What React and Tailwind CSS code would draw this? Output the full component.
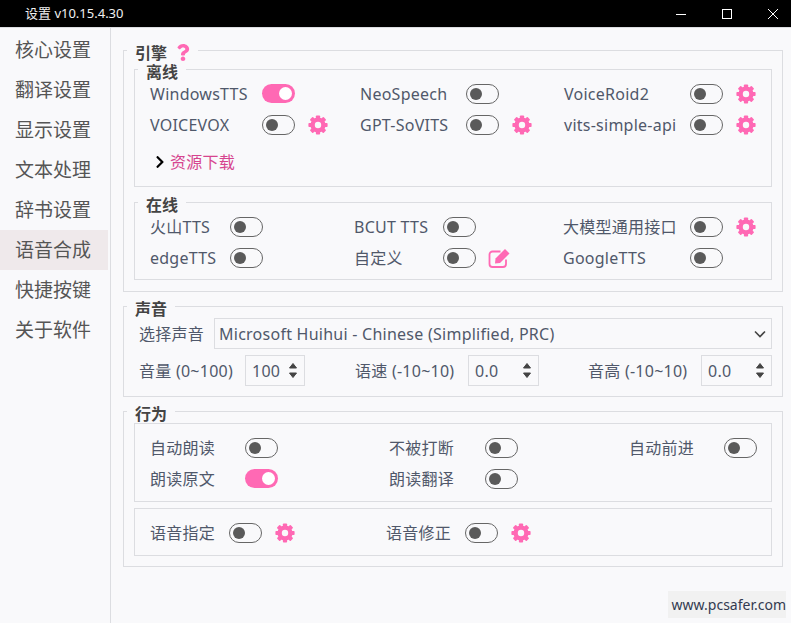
import React from "react";
import { FaQuestion, FaChevronRight } from "react-icons/fa";

const Toggle = ({ on }) =>
  on ? (
    <span className="flex h-[19px] w-[33px] shrink-0 items-center justify-end rounded-full bg-[#ff69b4] pr-[3px]">
      <span className="h-[13px] w-[13px] rounded-full bg-white" />
    </span>
  ) : (
    <span className="flex h-[20px] w-[33px] shrink-0 items-center rounded-full border border-[#666] pl-[3px]">
      <span className="h-[12px] w-[12px] rounded-full bg-[#5a5a5a]" />
    </span>
  );

const Gear = () => (
  <svg viewBox="0 0 20 20" className="ml-[13px] h-[20px] w-[20px] shrink-0 text-[#ff69b4]">
    <circle cx="10" cy="10" r="5.4" fill="none" stroke="currentColor" strokeWidth="4.4" />
    {[0, 45, 90, 135, 180, 225, 270, 315].map((a) => (
      <rect key={a} x="7.9" y="0.4" width="4.2" height="4.5" rx="0.8" fill="currentColor" transform={`rotate(${a} 10 10)`} />
    ))}
  </svg>
);

const EditIcon = () => (
  <svg viewBox="0 0 22 20" className="ml-[12px] h-[20px] w-[23px] shrink-0 text-[#ff69b4]">
    <path d="M12 3.500H4a3 3 0 0 0-3 3V16a3 3 0 0 0 3 3h10.500a3 3 0 0 0 3-3v-4.500" fill="none" stroke="currentColor" strokeWidth="1.800" />
    <path d="M7 10.500L16.500 1L21 5.500L11.500 15L6.500 15.500Z" fill="currentColor" />
  </svg>
);

const Cell = ({ label, w, on, gear, edit }) => (
  <div className="flex h-[31px] items-center">
    <span className={`whitespace-nowrap ${w}`}>{label}</span>
    <Toggle on={on} />
    {gear && <Gear />}
    {edit && <EditIcon />}
  </div>
);

const Group = ({ title, extra, className, children }) => (
  <section className={`relative border border-[#dcdde1] ${className}`}>
    {title && (
      <div className="absolute left-[3px] top-[-8px] flex h-[19px] items-center bg-[#f9f9fb] px-[8px] font-semibold leading-none tracking-normal text-[#444]">
        {title}
        {extra}
      </div>
    )}
    {children}
  </section>
);

const Spin = ({ value, w }) => (
  <div className={`flex h-[31px] items-center justify-between border border-[#dcdde1] pl-[6px] pr-[6px] ${w}`}>
    <span>{value}</span>
    <svg width="10" height="17" viewBox="0 0 10 17" className="text-[#444]">
      <path d="M5 1.500 L8.500 6 H1.500 Z M5 15.500 L8.500 11 H1.500 Z" fill="currentColor" stroke="currentColor" strokeLinejoin="round" />
    </svg>
  </div>
);

const nav = ["核心设置", "翻译设置", "显示设置", "文本处理", "辞书设置", "语音合成", "快捷按键", "关于软件"];

export default function App() {
  return (
    <div className="relative flex h-[623px] w-[791px] flex-col overflow-hidden bg-[#f9f9fb] font-['Noto_Sans','Noto_Sans_CJK_SC',sans-serif] text-[16px] tracking-[0.25px] text-[#50586a]">
      <header className="flex h-[27px] shrink-0 items-center bg-black pl-[25px] text-[13px] tracking-normal text-[#f0f0f0]">
        <span>设置 v10.15.4.30</span>
        <div className="ml-auto flex items-center gap-[36px] pr-[13px]">
          <svg width="10" height="10" viewBox="0 0 10 10" className="text-white"><path d="M0 5.500H10" stroke="currentColor" /></svg>
          <svg width="10" height="10" viewBox="0 0 10 10" className="text-white"><rect x=".5" y=".5" width="9" height="9" fill="none" stroke="currentColor" /></svg>
          <svg width="10" height="10" viewBox="0 0 10 10" className="text-white"><path d="M0 0L10 10M10 0L0 10" stroke="currentColor" /></svg>
        </div>
      </header>
      <div className="flex min-h-0 flex-1 border-t border-[#dcdde1]">
        <nav className="w-[111px] shrink-0 border-r border-[#dcdde1] pt-[2px] text-[19px] tracking-normal text-[#555]">
          {nav.map((n) => (
            <div key={n} className={`flex h-[40px] w-[108px] items-center pl-[15px] ${n === "语音合成" ? "bg-[#efe9eb]" : ""}`}>{n}</div>
          ))}
        </nav>
        <main className="flex flex-1 flex-col gap-[14px] pl-[12px] pr-[8px] pt-[22px]">
          <Group
            title="引擎"
            extra={<FaQuestion className="ml-[9px] h-[17px] w-[14px] text-[#ff69b4]" />}
            className="h-[242px] px-[10px] pt-[18px]"
          >
            <Group title="离线" className="h-[118px] pl-[15px] pt-[8px]">
              <div className="grid grid-cols-[210px_204px_1fr]">
                <Cell label="WindowsTTS" w="w-[112px]" on />
                <Cell label="NeoSpeech" w="w-[106px]" />
                <Cell label="VoiceRoid2" w="w-[126px]" gear />
                <Cell label="VOICEVOX" w="w-[112px]" gear />
                <Cell label="GPT-SoVITS" w="w-[106px]" gear />
                <Cell label="vits-simple-api" w="w-[126px]" gear />
              </div>
              <div className="mt-[6px] flex h-[31px] items-center pl-[4px] text-[#d6458f]">
                <FaChevronRight className="h-[14px] w-[12px] text-black" />
                <span className="ml-[4px] tracking-[0.25px]">资源下载</span>
              </div>
            </Group>
            <Group title="在线" className="mt-[15px] h-[78px] pl-[15px] pt-[8px]">
              <div className="grid grid-cols-[204px_209px_1fr]">
                <Cell label="火山TTS" w="w-[80px]" />
                <Cell label="BCUT TTS" w="w-[89px]" />
                <Cell label="大模型通用接口" w="w-[127px]" gear />
                <Cell label="edgeTTS" w="w-[80px]" />
                <Cell label="自定义" w="w-[89px]" edit />
                <Cell label="GoogleTTS" w="w-[127px]" />
              </div>
            </Group>
          </Group>

          <Group title="声音" className="h-[91px] pl-[15px] pr-[10px] pt-[11px]">
            <div className="flex h-[31px] items-center">
              <span className="w-[75px]">选择声音</span>
              <div className="flex h-[31px] flex-1 items-center justify-between border border-[#dcdde1] pl-[4px] pr-[5px]">
                <span>Microsoft Huihui - Chinese (Simplified, PRC)</span>
                <svg width="12" height="8" viewBox="0 0 12 8" className="text-[#444]"><path d="M1 1.500L6 6.500L11 1.500" fill="none" stroke="currentColor" strokeWidth="1.600" /></svg>
              </div>
            </div>
            <div className="mt-[6px] flex h-[31px] items-center">
              <span className="w-[106px] whitespace-nowrap">音量 (0~100)</span>
              <Spin value="100" w="w-[60px]" />
              <span className="ml-[50px] w-[113px] whitespace-nowrap">语速 (-10~10)</span>
              <Spin value="0.0" w="w-[71px]" />
              <span className="ml-[49px] w-[113px] whitespace-nowrap">音高 (-10~10)</span>
              <Spin value="0.0" w="w-[71px]" />
            </div>
          </Group>

          <Group title="行为" className="h-[156px] px-[10px] pt-[11px]">
            <Group className="h-[79px] pl-[15px] pt-[8px]">
              <div className="grid grid-cols-[239px_240px_1fr]">
                <Cell label="自动朗读" w="w-[95px]" />
                <Cell label="不被打断" w="w-[96px]" />
                <Cell label="自动前进" w="w-[95px]" />
                <Cell label="朗读原文" w="w-[95px]" on />
                <Cell label="朗读翻译" w="w-[96px]" />
              </div>
            </Group>
            <Group className="mt-[6px] h-[48px] pl-[15px] pt-[8px]">
              <div className="grid grid-cols-[236px_1fr]">
                <Cell label="语音指定" w="w-[79px]" gear />
                <Cell label="语音修正" w="w-[79px]" gear />
              </div>
            </Group>
          </Group>
        </main>
      </div>
      <div className="absolute bottom-[5px] right-[5px] flex h-[27px] w-[118px] items-center justify-end bg-[#f1f1f1] text-[14px] tracking-normal text-[#333a50]">www.pcsafer.com</div>
    </div>
  );
}
